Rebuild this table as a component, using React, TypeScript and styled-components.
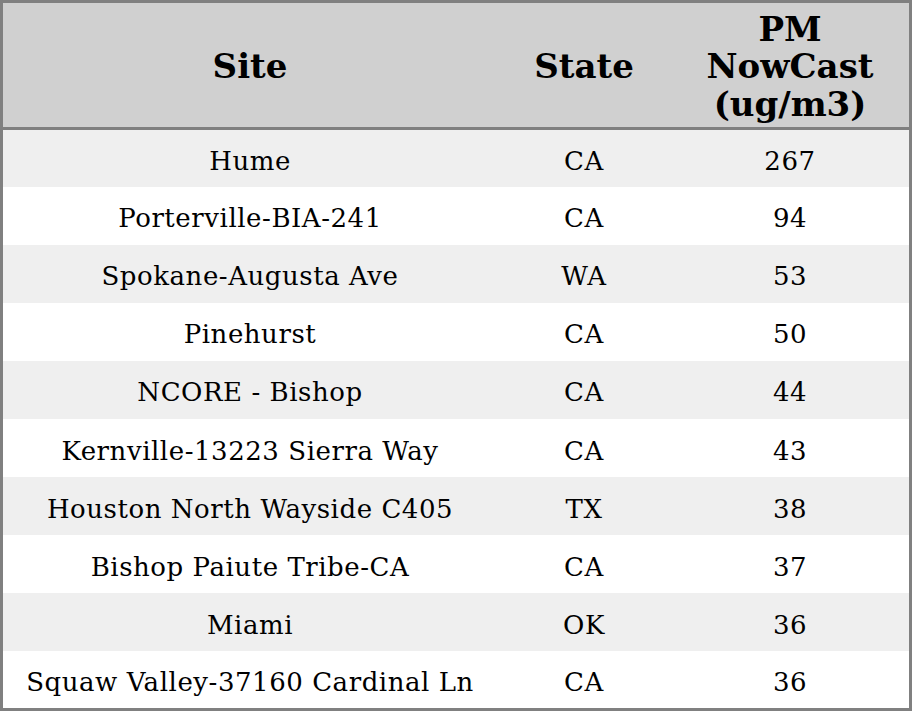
import React from "react";
import styled, { createGlobalStyle } from "styled-components";

const GlobalStyle = createGlobalStyle`
  html, body {
    margin: 0;
    padding: 0;
    background: #ffffff;
  }
`;

const Table = styled.table`
  width: 912px;
  height: 711px;
  border-collapse: collapse;
  border: 3px solid #808080;
  font-family: 'DejaVu Serif', serif;
  color: #000000;
  table-layout: fixed;
`;

const HeadRow = styled.tr`
  background-color: #d0d0d0;
  border-bottom: 3px solid #808080;
  height: 127px;
`;

const HeadCell = styled.th<{ w: number }>`
  width: ${props => props.w}px;
  font-weight: 700;
  font-size: 34px;
  line-height: 37.5px;
  text-align: center;
  padding: 4px 0 0;
`;

const Row = styled.tr<{ odd?: boolean }>`
  background-color: ${props => (props.odd ? "#efefef" : "#ffffff")};
  height: 57px;
`;

const Cell = styled.td`
  font-size: 26px;
  letter-spacing: 0.55px;
  text-align: center;
  padding: 5px 0 0;
  white-space: nowrap;
`;

const rows: [string, string, number][] = [
  ["Hume", "CA", 267],
  ["Porterville-BIA-241", "CA", 94],
  ["Spokane-Augusta Ave", "WA", 53],
  ["Pinehurst", "CA", 50],
  ["NCORE - Bishop", "CA", 44],
  ["Kernville-13223 Sierra Way", "CA", 43],
  ["Houston North Wayside C405", "TX", 38],
  ["Bishop Paiute Tribe-CA", "CA", 37],
  ["Miami", "OK", 36],
  ["Squaw Valley-37160 Cardinal Ln", "CA", 36],
];

const App: React.FC = () => (
  <React.Fragment>
    <GlobalStyle />
    <Table>
      <thead>
        <HeadRow>
          <HeadCell w={494}>Site</HeadCell>
          <HeadCell w={174}>State</HeadCell>
          <HeadCell w={238}>PM<br />NowCast<br />(ug/m3)</HeadCell>
        </HeadRow>
      </thead>
      <tbody>
        {rows.map(([site, state, pm], i) => (
          <Row key={`row.${i}`} odd={i % 2 === 0}>
            <Cell>{site}</Cell>
            <Cell>{state}</Cell>
            <Cell>{pm}</Cell>
          </Row>
        ))}
      </tbody>
    </Table>
  </React.Fragment>
);

export default App;
